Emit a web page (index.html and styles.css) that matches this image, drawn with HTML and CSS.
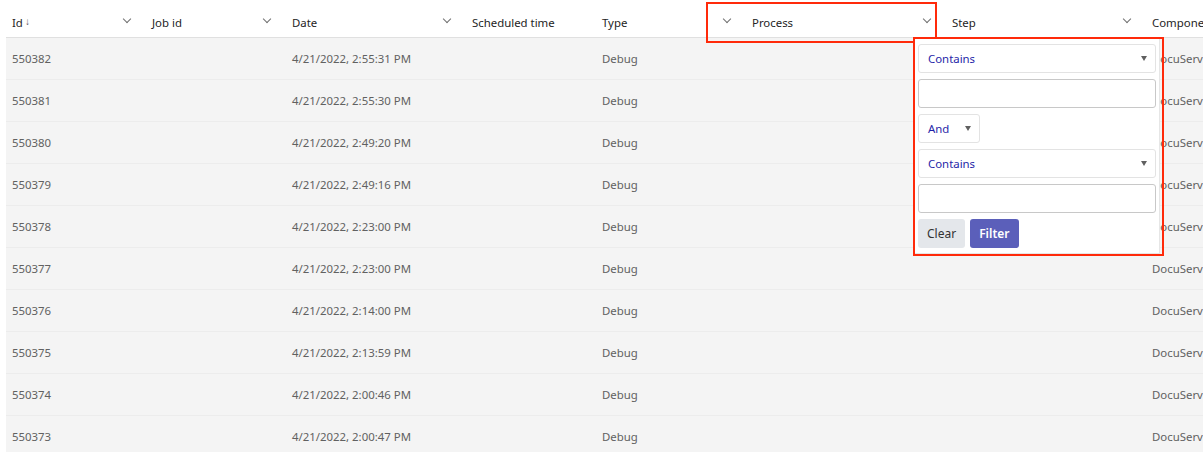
FILE: index.html
```html
<!DOCTYPE html>
<html lang="en">
<head>
    <meta charset="UTF-8">
    <title>Jobs</title>
    <link rel="stylesheet" href="styles.css">
</head>
<body>
    <div class="grid-wrap">
        <table class="grid">
            <colgroup>
                <col class="w140"><col class="w140"><col class="w180"><col class="w130">
                <col class="w150"><col class="w200"><col class="w200"><col class="w200">
            </colgroup>
            <thead>
                <tr>
                    <th>Id<span class="sort">&#8595;</span><span class="chev"></span></th>
                    <th>Job id<span class="chev"></span></th>
                    <th>Date<span class="chev"></span></th>
                    <th>Scheduled time</th>
                    <th>Type<span class="chev"></span></th>
                    <th>Process<span class="chev"></span></th>
                    <th>Step<span class="chev"></span></th>
                    <th>Component</th>
                </tr>
            </thead>
            <tbody>
                <tr><td>550382</td><td></td><td>4/21/2022, 2:55:31 PM</td><td></td><td>Debug</td><td></td><td></td><td>DocuServer</td></tr>
                <tr><td>550381</td><td></td><td>4/21/2022, 2:55:30 PM</td><td></td><td>Debug</td><td></td><td></td><td>DocuServer</td></tr>
                <tr><td>550380</td><td></td><td>4/21/2022, 2:49:20 PM</td><td></td><td>Debug</td><td></td><td></td><td>DocuServer</td></tr>
                <tr><td>550379</td><td></td><td>4/21/2022, 2:49:16 PM</td><td></td><td>Debug</td><td></td><td></td><td>DocuServer</td></tr>
                <tr><td>550378</td><td></td><td>4/21/2022, 2:23:00 PM</td><td></td><td>Debug</td><td></td><td></td><td>DocuServer</td></tr>
                <tr><td>550377</td><td></td><td>4/21/2022, 2:23:00 PM</td><td></td><td>Debug</td><td></td><td></td><td>DocuServer</td></tr>
                <tr><td>550376</td><td></td><td>4/21/2022, 2:14:00 PM</td><td></td><td>Debug</td><td></td><td></td><td>DocuServer</td></tr>
                <tr><td>550375</td><td></td><td>4/21/2022, 2:13:59 PM</td><td></td><td>Debug</td><td></td><td></td><td>DocuServer</td></tr>
                <tr><td>550374</td><td></td><td>4/21/2022, 2:00:46 PM</td><td></td><td>Debug</td><td></td><td></td><td>DocuServer</td></tr>
                <tr><td>550373</td><td></td><td>4/21/2022, 2:00:47 PM</td><td></td><td>Debug</td><td></td><td></td><td>DocuServer</td></tr>
            </tbody>
        </table>
    </div>

    <div class="mark mark-head"></div>

    <div class="filter-pop">
        <div class="sel">Contains<span class="caret"></span></div>
        <input class="txt" type="text">
        <div class="sel sel-small">And<span class="caret"></span></div>
        <div class="sel">Contains<span class="caret"></span></div>
        <input class="txt" type="text">
        <div class="btns">
            <button class="btn-clear">Clear</button>
            <button class="btn-filter">Filter</button>
        </div>
    </div>
    <div class="mark mark-pop"></div>
</body>
</html>
```

FILE: styles.css
```css
body {
    margin: 0;
    font-family: "Noto Sans", "Open Sans", sans-serif;
    font-size: 11.4px;
    background: #fff;
    overflow: hidden;
}

.grid-wrap {
    margin-left: 6px;
    overflow: hidden;
    height: 452px;
    background: #f4f4f4;
}

.grid {
    table-layout: fixed;
    width: 1340px;
    border-collapse: collapse;
}

.w140 { width: 140px; }
.w180 { width: 180px; }
.w130 { width: 130px; }
.w150 { width: 150px; }
.w200 { width: 200px; }

.grid th {
    position: relative;
    height: 30px;
    padding: 7px 6px 0 6px;
    text-align: left;
    font-weight: normal;
    color: #242424;
    background: #fff;
    border-bottom: 1px solid #e0e0e0;
    white-space: nowrap;
    overflow: hidden;
}

.grid td {
    height: 41px;
    padding: 0 6px;
    color: #616161;
    border-bottom: 1px solid #ececec;
    white-space: nowrap;
    overflow: hidden;
}

.sort {
    font-size: 10px;
    color: #555;
    margin-left: 2px;
    vertical-align: 2px;
}

.chev {
    position: absolute;
    right: 16px;
    top: 16px;
    width: 5px;
    height: 5px;
    border-right: 1px solid #707070;
    border-bottom: 1px solid #707070;
    transform: rotate(45deg);
}

.filter-pop {
    position: absolute;
    left: 914px;
    top: 38px;
    width: 238px;
    padding: 5px 3px;
    background: #fff;
    border: 1px solid #e6e6e6;
    display: flex;
    flex-direction: column;
    gap: 6px;
}

.sel {
    position: relative;
    height: 27px;
    line-height: 27px;
    padding: 0 9px;
    border: 1px solid #e3e3e3;
    border-radius: 3px;
    color: #1f1fa8;
    background: #fff;
}

.sel-small {
    width: 42px;
}

.caret {
    position: absolute;
    right: 8px;
    top: 11px;
    border-left: 3px solid transparent;
    border-right: 3px solid transparent;
    border-top: 5px solid #606060;
}

.txt {
    height: 29px;
    box-sizing: border-box;
    margin: 0;
    border: 1px solid #c8c8c8;
    border-radius: 3px;
}

.btns {
    display: flex;
    gap: 5px;
}

.btns button {
    height: 29px;
    border: none;
    border-radius: 3px;
    font-family: inherit;
    font-size: 12px;
    padding: 0 9px;
}

.btn-clear {
    background: #e4e7eb;
    color: #333;
}

.btn-filter {
    background: #5b5fba;
    color: #fff;
    font-weight: 600;
}

.mark {
    position: absolute;
    border: 2px solid #ff2a0a;
    box-sizing: border-box;
}

.mark-head {
    left: 706px;
    top: 2px;
    width: 231px;
    height: 41px;
}

.mark-pop {
    left: 913px;
    top: 37px;
    width: 251px;
    height: 219px;
}
```
